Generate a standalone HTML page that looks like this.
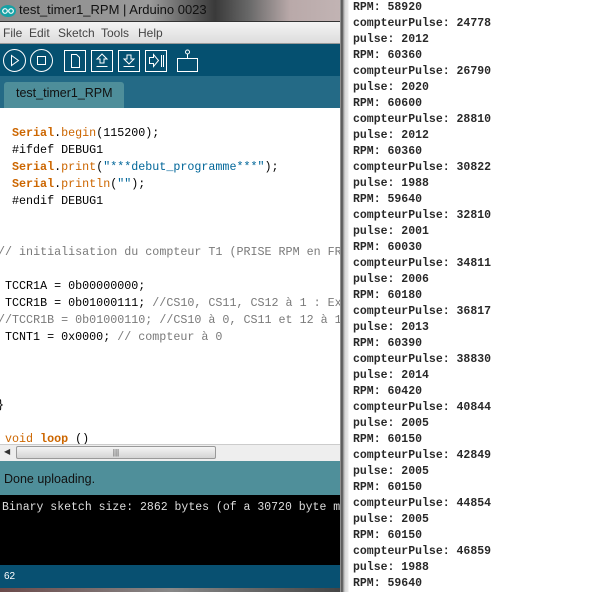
<!DOCTYPE html>
<html><head><meta charset="utf-8"><style>
*{margin:0;padding:0;box-sizing:border-box}
body{width:616px;height:592px;overflow:hidden;position:relative;background:#fff;font-family:"Liberation Sans",sans-serif}
.a{position:absolute}
#title{left:0;top:0;width:342px;height:22px;background:linear-gradient(90deg,#8c8c8c 0,#9a9a9a 150px,#3a3a3a 215px,#6a6a6a 250px,#b9a9a9 290px,#c2b4b4 342px);border-bottom:1px solid #333}
#title span{position:absolute;left:19px;top:2px;font-size:13px;color:#111}
#menu{left:0;top:22px;width:342px;height:22px;background:linear-gradient(#f4f4f4,#dcdcdc);border-bottom:1px solid #999;font-size:12px;color:#444}
#menu span{position:absolute;top:4px}
#tool{left:0;top:44px;width:342px;height:32px;background:#055070}
#tabs{left:0;top:76px;width:342px;height:32px;background:#246a86}
#tab{left:4px;top:82px;width:120px;height:26px;background:#4e8e9a;border-radius:3px 3px 0 0;font-size:12.5px;color:#111;padding:4px 0 0 12px}
.code{position:absolute;font-family:"Liberation Mono",monospace;font-size:11.7px;line-height:17px;white-space:pre;color:#000}
.k{color:#cc6600;font-weight:bold}
.f{color:#cc6600}
.s{color:#006699}
.c{color:#7a7a7a}
#sb{left:0;top:444px;width:342px;height:17px;background:#eee;border-top:1px solid #ccc}
#thumb{left:16px;top:446px;width:200px;height:13px;background:linear-gradient(#f4f4f4,#d4d4d4);border:1px solid #999;border-radius:2px;font-size:8px;text-align:center;color:#444;line-height:11px}
#status{left:0;top:461px;width:342px;height:34px;background:#4f8f9a;font-size:12.5px;color:#111;padding:11px 0 0 4px}
#con{left:0;top:495px;width:342px;height:70px;background:#000}
#bot{left:0;top:565px;width:342px;height:23px;background:#085071;color:#fff;font-size:10px;padding:6px 0 0 4px}
#bot2{left:0;top:588px;width:342px;height:4px;background:linear-gradient(90deg,#6b4a4a,#888,#444)}
#bord{left:340px;top:0;width:9px;height:592px;background:linear-gradient(90deg,#aaa,#444 2px,#888 3px,#d8d8d8 5px,#e8e8e8 8px,#fff)}
#ser{left:353px;top:0;font-family:"Liberation Mono",monospace;font-size:11.5px;line-height:16px;white-space:pre;color:#111;font-weight:bold;opacity:.9}
</style></head><body>
<div class="a" id="title"><svg class="a" style="left:0;top:4px" width="16" height="14"><ellipse cx="8" cy="7" rx="8" ry="6" fill="#17a1a5"/><circle cx="5" cy="7" r="2.3" fill="none" stroke="#fff" stroke-width="1.2"/><circle cx="11" cy="7" r="2.3" fill="none" stroke="#fff" stroke-width="1.2"/></svg><span>test_timer1_RPM | Arduino 0023</span></div>
<div class="a" id="menu"><span style="left:3px">File</span><span style="left:29px">Edit</span><span style="left:58px">Sketch</span><span style="left:101px">Tools</span><span style="left:138px">Help</span></div>
<div class="a" id="tool"><svg width="342" height="32" fill="none" stroke="#fff" stroke-width="1">
<circle cx="14.5" cy="16.5" r="11"/><path d="M11.5 11.5v10l7-5z"/>
<circle cx="41.5" cy="16.5" r="11"/><rect x="37.5" y="12.5" width="8" height="8"/>
<rect x="64.5" y="6.5" width="21" height="21"/><path d="M71.5 10.5h5l3 3v10h-8z"/>
<rect x="91.5" y="6.5" width="21" height="21"/><path d="M102 10l-5 5h3v4h4v-4h3z M96.5 22.5h11"/>
<rect x="118.5" y="6.5" width="21" height="21"/><path d="M129 20l-5-5h3v-4h4v4h3z M123.5 22.5h11"/>
<rect x="145.5" y="6.5" width="21" height="21"/><path d="M149.5 13.5h4v-3l5 6-5 6v-3h-4z M161.5 11v12 M163.5 11v12"/>
<rect x="177.5" y="14.5" width="20" height="13"/><path d="M187.5 14.5v-5"/><circle cx="187.5" cy="8" r="2"/>
</svg></div>
<div class="a" id="tabs"></div>
<div class="a" id="tab">test_timer1_RPM</div>
<div class="code" style="left:12px;top:125px"><span class="k">Serial</span>.<span class="f">begin</span>(115200);
#ifdef DEBUG1
<span class="k">Serial</span>.<span class="f">print</span>(<span class="s">"***debut_programme***"</span>);
<span class="k">Serial</span>.<span class="f">println</span>(<span class="s">""</span>);
#endif DEBUG1</div>
<div class="code c" style="left:-2px;top:244px">// initialisation du compteur T1 (PRISE RPM en FR</div>
<div class="code" style="left:5px;top:278px">TCCR1A = 0b00000000;
TCCR1B = 0b01000111; <span class="c">//CS10, CS11, CS12 à 1 : Ex</span>
</div>
<div class="code c" style="left:-2px;top:312px">//TCCR1B = 0b01000110; //CS10 à 0, CS11 et 12 à 1</div>
<div class="code" style="left:5px;top:329px">TCNT1 = 0x0000; <span class="c">// compteur à 0</span></div>
<div class="code" style="left:-3px;top:397px">}</div>
<div class="code" style="left:5px;top:431px"><span class="f">void</span> <span class="k">loop</span> ()</div>
<div class="a" id="sb"><span class="a" style="left:4px;top:2px;font-size:8px;color:#333">◀</span></div>
<div class="a" id="thumb">|||</div>
<div class="a" id="status">Done uploading.</div>
<div class="a" id="con"><div class="code" style="left:2px;top:4px;color:#ddd;font-size:11.5px">Binary sketch size: 2862 bytes (of a 30720 byte m</div></div>
<div class="a" id="bot">62</div>
<div class="a" id="bot2"></div>
<div class="a" id="bord"></div>
<div class="a" id="ser">RPM: 58920
compteurPulse: 24778
pulse: 2012
RPM: 60360
compteurPulse: 26790
pulse: 2020
RPM: 60600
compteurPulse: 28810
pulse: 2012
RPM: 60360
compteurPulse: 30822
pulse: 1988
RPM: 59640
compteurPulse: 32810
pulse: 2001
RPM: 60030
compteurPulse: 34811
pulse: 2006
RPM: 60180
compteurPulse: 36817
pulse: 2013
RPM: 60390
compteurPulse: 38830
pulse: 2014
RPM: 60420
compteurPulse: 40844
pulse: 2005
RPM: 60150
compteurPulse: 42849
pulse: 2005
RPM: 60150
compteurPulse: 44854
pulse: 2005
RPM: 60150
compteurPulse: 46859
pulse: 1988
RPM: 59640</div>
</body></html>
